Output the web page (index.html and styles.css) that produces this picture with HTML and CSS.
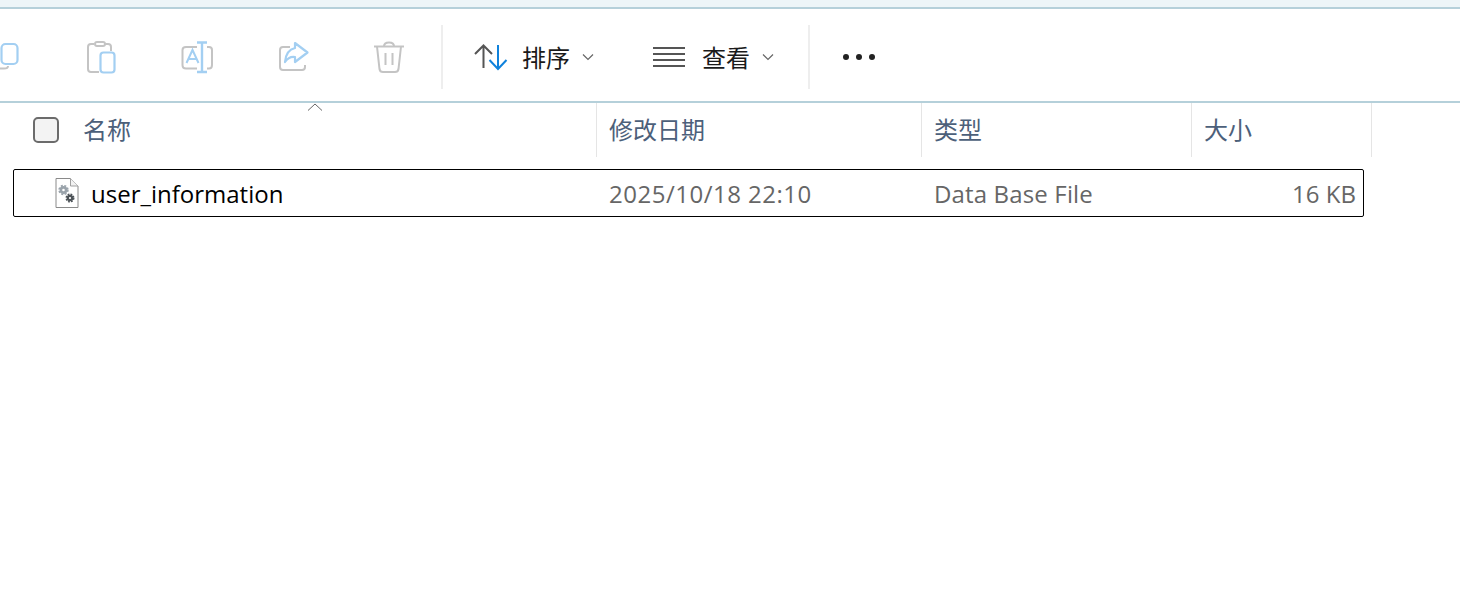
FILE: index.html
```html
<!DOCTYPE html>
<html lang="zh-CN">
<head>
    <meta charset="UTF-8">
    <title>文件资源管理器</title>
    <link rel="stylesheet" href="styles.css">
</head>
<body>
    <div class="top-strip"></div>

    <div class="toolbar">
        <div class="tool-btn">
            <svg width="48" height="48" viewBox="0 0 48 48" fill="none">
                <path d="M19 35.500 H23 Q27 35.500 27 33" stroke="#c4c4c4" stroke-width="2"/>
                <rect x="20.500" y="11" width="16" height="20" rx="4" stroke="#a3cff2" stroke-width="2.200"/>
            </svg>
        </div>
        <div class="tool-btn">
            <svg width="48" height="48" viewBox="0 0 48 48" fill="none">
                <path d="M22 39 H14 Q11 39 11 36 V14 Q11 11 14 11 H17 M28 11 H31 Q34 11 34 14 V18" stroke="#c4c4c4" stroke-width="2"/>
                <rect x="18" y="9" width="10" height="4" rx="2" stroke="#c4c4c4" stroke-width="2"/>
                <rect x="23.500" y="19.500" width="14" height="20" rx="3" stroke="#a3cff2" stroke-width="2.200"/>
            </svg>
        </div>
        <div class="tool-btn">
            <svg width="48" height="48" viewBox="0 0 48 48" fill="none">
                <path d="M24 14 H13 Q9.500 14 9.500 17 V32 Q9.500 35.500 13 35.500 H24 M34 14 H36 Q39 14 39 17 V32 Q39 35.500 36 35.500 H34" stroke="#c4c4c4" stroke-width="2"/>
                <path d="M24 9.500 H34 M29 9.500 V39 M24 39 H34" stroke="#a3cff2" stroke-width="2.400"/>
                <path d="M13.500 30 L19.500 17 L25.500 30 M15.500 26 H23.500" stroke="#a3cff2" stroke-width="2"/>
            </svg>
        </div>
        <div class="tool-btn">
            <svg width="48" height="48" viewBox="0 0 48 48" fill="none">
                <path d="M21 14 H14 Q11 14 11 17 V34 Q11 37 14 37 H33 Q36 37 36 34 V32" stroke="#c4c4c4" stroke-width="2"/>
                <path d="M26 10 L38.500 19.500 L26 29 V24 Q20 23 16 29 Q17 17 26 15 Z" stroke="#a3cff2" stroke-width="2.200" stroke-linejoin="round"/>
            </svg>
        </div>
        <div class="tool-btn">
            <svg width="48" height="48" viewBox="0 0 48 48" fill="none" stroke="#c4c4c4" stroke-width="2">
                <path d="M9 13.500 H39"/>
                <path d="M19 13.500 Q19 9.500 24 9.500 Q29 9.500 29 13.500"/>
                <path d="M12 13.500 L14.500 36 Q15 39 18 39 H30 Q33 39 33.500 36 L36 13.500"/>
                <path d="M20.500 20 V32 M27.500 20 V32"/>
            </svg>
        </div>
        <div class="tool-sep first-sep"></div>
        <div class="tool-text sort-btn">
            <svg width="34" height="30" viewBox="0 0 34 30" fill="none" stroke-width="2">
                <path d="M9.500 3 V26 M1 12 L9.500 3.500 L18 12" stroke="#555"/>
                <path d="M24 3 V27 M15.500 18 L24 27 L32.500 18" stroke="#0f82dc"/>
            </svg>
            <span class="tool-label">排序</span>
            <svg class="chev" width="12" height="8" viewBox="0 0 12 8" fill="none"><path d="M1 1.500 L6 6.500 L11 1.500" stroke="#666" stroke-width="1.200"/></svg>
        </div>
        <div class="tool-text view-btn">
            <svg width="32" height="22" viewBox="0 0 32 22" fill="none" stroke="#555" stroke-width="2">
                <path d="M0 2 H32 M0 8 H32 M0 14 H32 M0 20 H32"/>
            </svg>
            <span class="tool-label">查看</span>
            <svg class="chev" width="12" height="8" viewBox="0 0 12 8" fill="none"><path d="M1 1.500 L6 6.500 L11 1.500" stroke="#666" stroke-width="1.200"/></svg>
        </div>
        <div class="tool-sep"></div>
        <div class="more-btn">
            <span class="dot"></span><span class="dot"></span><span class="dot"></span>
        </div>
    </div>

    <div class="list-header">
        <div class="col col-name">
            <span class="check"></span>
            <span class="col-label">名称</span>
            <svg class="sort-arrow" width="16" height="8" viewBox="0 0 16 8" fill="none"><path d="M1 7.500 L8 1 L15 7.500" stroke="#666" stroke-width="1"/></svg>
        </div>
        <div class="col col-date"><span class="col-label">修改日期</span></div>
        <div class="col col-type"><span class="col-label">类型</span></div>
        <div class="col col-size"><span class="col-label">大小</span></div>
    </div>

    <div class="file-row">
        <div class="cell-name">
            <svg width="24" height="30" viewBox="0 0 24 30" fill="none">
                <path d="M1 .500 H15.500 L23 8 V29.500 H1 Z" fill="#fff" stroke="#8a8a8a"/>
                <path d="M15.500 .500 V8 H23" fill="#f2f2f2" stroke="#a0a0a0"/>
                <circle cx="8.500" cy="12" r="2.600" stroke="#9aa3ab" stroke-width="2.600"/>
                <circle cx="8.500" cy="12" r="4.400" stroke="#9aa3ab" stroke-width="1.600" stroke-dasharray="2 1.500"/>
                <circle cx="15" cy="20" r="2.200" stroke="#4d5358" stroke-width="2.200"/>
                <circle cx="15" cy="20" r="3.800" stroke="#4d5358" stroke-width="1.400" stroke-dasharray="1.800 1.200"/>
            </svg>
            <span>user_information</span>
        </div>
        <div class="cell-date">2025/10/18 22:10</div>
        <div class="cell-type">Data Base File</div>
        <div class="cell-size">16 KB</div>
    </div>
</body>
</html>
```

FILE: styles.css
```css
html, body {
    margin: 0;
    padding: 0;
    height: 100%;
    overflow: hidden;
    background-color: #fff;
    font-family: "Open Sans", "Noto Sans CJK SC", sans-serif;
}

.top-strip {
    height: 7px;
    background-color: #edf5f8;
    border-bottom: 2px solid #b5d0da;
}

/* Toolbar */
.toolbar {
    display: flex;
    align-items: center;
    height: 88px;
    padding-top: 4px;
    margin-left: -43px;
    border-bottom: 2px solid #b5d0da;
}

.tool-btn {
    display: flex;
    align-items: center;
    justify-content: center;
    flex: none;
    width: 96px;
    height: 48px;
}

.tool-sep {
    flex: none;
    width: 2px;
    height: 64px;
    background-color: #eeeeee;
}

.first-sep {
    margin-left: 4px;
}

.tool-text {
    display: flex;
    align-items: center;
    flex: none;
    color: #1a1a1a;
    font-size: 24px;
}

.sort-btn {
    margin-left: 31px;
}

.view-btn {
    margin-left: 59px;
    margin-right: 34px;
}

.tool-label {
    margin-left: 14px;
    padding-top: 2px;
    line-height: 48px;
}

.chev {
    margin-left: 12px;
}

.view-btn .tool-label {
    margin-left: 17px;
}

.more-btn {
    display: flex;
    gap: 7px;
    margin-left: 33px;
}

.dot {
    width: 6px;
    height: 6px;
    border-radius: 50%;
    background-color: #222;
}

/* Column headers */
.list-header {
    display: flex;
    height: 54px;
    color: #4c607a;
    font-size: 24px;
}

.col {
    display: flex;
    align-items: center;
    flex: none;
    box-sizing: border-box;
    height: 54px;
    padding-left: 12px;
    border-right: 1px solid #e5e5e5;
}

.col-label {
    padding-bottom: 4px;
}

.col-name {
    position: relative;
    width: 597px;
    padding-left: 33px;
}

.col-date {
    width: 325px;
}

.col-type {
    width: 270px;
}

.col-size {
    width: 180px;
}

.check {
    flex: none;
    box-sizing: border-box;
    width: 26px;
    height: 26px;
    margin-right: 24px;
    background-color: #f3f3f3;
    border: 2px solid #6b6b6b;
    border-radius: 5px;
}

.sort-arrow {
    position: absolute;
    top: 0;
    left: 307px;
}

/* File row */
.file-row {
    display: flex;
    align-items: center;
    box-sizing: border-box;
    width: 1351px;
    height: 48px;
    margin: 12px 0 0 13px;
    border: 1px solid #000;
    border-radius: 2px;
    color: #666;
    font-size: 24px;
}

.cell-name {
    display: flex;
    align-items: center;
    flex: none;
    width: 595px;
    padding-left: 41px;
    box-sizing: border-box;
    color: #000;
}

.cell-name span {
    margin-left: 12px;
}

.cell-date {
    flex: none;
    width: 325px;
    letter-spacing: .5px;
}

.cell-type {
    flex: none;
    width: 270px;
    letter-spacing: .15px;
}

.cell-size {
    flex: 1;
    padding-right: 7px;
    text-align: right;
}
```
